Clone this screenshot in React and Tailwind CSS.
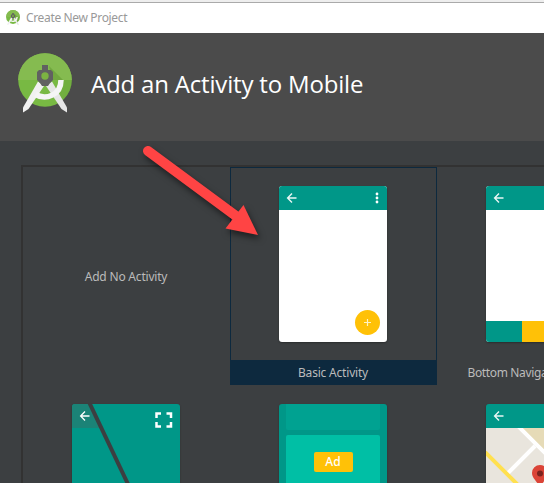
import React from "react";

function StudioLogo({ className }) {
  return (
    <svg className={className} viewBox="0 0 54 62" fill="none">
      <circle cx="27" cy="27" r="26.8" fill="#78b943" />
      <path d="M.2 27a26.8 26.8 0 0 1 53.6 0z" fill="#85bb50" />
      <path d="M31 13 45 27h-11z" fill="#689f38" opacity=".7" />
      <path d="M46 27h7.800a26.800 26.800 0 0 1-9 20L38 39z" fill="#689f38" opacity=".35" />
      <path d="M20 28.500 5 54.500v5L10.500 56 26 33z" fill="#f1f1f1" />
      <path d="m34 28.500 15 26v5L43.500 56 28 33z" fill="#e6e6e6" />
      <path d="M17.500 41.500C28 47.500 43 42 43 27" stroke="#f5f5f5" strokeWidth="5.500" />
      <path d="M24 12h6v5h3l2 2v8l-3 3-2 3h-6l-2-3-3-3v-8l2-2h3z" fill="#616161" />
      <circle cx="27" cy="23" r="3.700" fill="#7cb342" />
    </svg>
  );
}

function BackArrow() {
  return (
    <svg className="h-[12px] w-[12px]" viewBox="0 0 12 12" fill="none" stroke="#e8f6f4" strokeWidth="1.400">
      <path d="M10.500 6H2M6 1.500 1.600 6 6 10.500" />
    </svg>
  );
}

function Toolbar({ menu }) {
  return (
    <div className="flex h-6 shrink-0 items-center justify-between bg-[#009788] pl-[7px] pr-2">
      <BackArrow />
      {menu && (
        <svg className="h-[12px] w-[4px]" viewBox="0 0 4 12" fill="#ffffff">
          <circle cx="2" cy="2" r="1.400" />
          <circle cx="2" cy="6" r="1.400" />
          <circle cx="2" cy="10" r="1.400" />
        </svg>
      )}
    </div>
  );
}

function Phone({ className = "", children }) {
  return (
    <div className={"flex h-[156px] w-[108px] shrink-0 flex-col overflow-hidden rounded-[3px] shadow-[0_1px_2px_rgba(0,0,0,0.3)] " + className}>
      {children}
    </div>
  );
}

function Cell({ label, labelClass = "", selected, children }) {
  return (
    <div className={"flex h-[218px] w-[207px] flex-col border pt-[18px] " + (selected ? "border-[#0d293e]" : "border-transparent")}>
      <div className="pl-12">{children}</div>
      {label && (
        <div className={"mt-[18px] flex h-6 w-full shrink-0 items-center justify-center whitespace-nowrap pt-[2px] " + (selected ? "bg-[#0d293e] " : "") + labelClass}>
          {label}
        </div>
      )}
    </div>
  );
}

export default function App() {
  return (
    <div className="relative flex h-[483px] w-[544px] flex-col overflow-hidden bg-[#3c3f41] font-['Noto_Sans',sans-serif] text-[12px] tracking-[-0.200px] text-[#bbbbbb]">
      <div className="flex h-[33px] shrink-0 items-center border-t-[2px] border-[#eeeeee] bg-white">
        <div className="flex h-[31px] w-full items-center border-t border-[#aaaaaa] pl-[6px]">
          <StudioLogo className="h-[16px] w-[14px]" />
          <span className="ml-[6px] text-[12px] tracking-[-0.350px] text-[#999999]">Create New Project</span>
        </div>
      </div>
      <header className="flex h-[108px] shrink-0 items-center bg-[#4b4b4b] pb-[6px] pl-[18px]">
        <StudioLogo className="h-[62px] w-[54px]" />
        <h1 className="ml-[19px] whitespace-nowrap font-['Open_Sans',sans-serif] text-[24px] leading-8 tracking-[-0.180px] text-white">Add an Activity to Mobile</h1>
      </header>
      <main className="ml-[21px] mt-6 h-[318px] w-[660px] shrink-0 overflow-hidden border-l-2 border-t-2 border-[#323232]">
        <div className="grid w-[621px] grid-cols-3">
          <div className="flex h-[218px] items-center justify-center pr-[1px] pt-[2px]">Add No Activity</div>
          <Cell label="Basic Activity" labelClass="pr-[1px]" selected>
            <Phone className="bg-white">
              <Toolbar menu />
              <div className="flex flex-1 items-end justify-end pb-[7px] pr-[7px]">
                <div className="flex h-[25px] w-[25px] items-center justify-center rounded-full bg-[#ffc107]">
                  <svg className="h-[7px] w-[7px]" viewBox="0 0 7 7" stroke="#fff3c4" strokeWidth="1.200">
                    <path d="M3.500 0v7M0 3.500h7" />
                  </svg>
                </div>
              </div>
            </Phone>
          </Cell>
          <Cell label="Bottom Navigation Activity" labelClass="pr-[5px] tracking-[-0.350px]">
            <Phone className="bg-white">
              <Toolbar menu />
              <div className="flex-1" />
              <div className="grid h-[21px] grid-cols-3">
                <div className="bg-[#009788]" />
                <div className="bg-[#ffc107]" />
                <div className="bg-[#009788]" />
              </div>
            </Phone>
          </Cell>
          <Cell>
            <Phone>
              <svg className="h-[156px] w-[108px]" viewBox="0 0 108 156" fill="none">
                <path d="M0 0h108v156H0z" fill="#009788" />
                <path d="M0 0h17l11 24H0z" fill="#1b8377" />
                <path d="M17 -2 92 156" stroke="#3c3f41" strokeWidth="4" />
                <path d="M17.500 12H9m4-4.500L8.600 12 13 16.500" stroke="#fff" strokeWidth="1.300" />
                <path d="M84.500 14v-4.500H89M94.500 9.500h4.500V14M99 18v4.500h-4.500M89 22.500h-4.500V18" stroke="#fff" strokeWidth="2.500" />
              </svg>
            </Phone>
          </Cell>
          <Cell>
            <Phone className="bg-[#009788] px-[7px]">
              <div className="h-[26px] shrink-0 rounded-b-[2px] bg-[#00a291]" />
              <div className="mt-[5px] flex h-[56px] shrink-0 items-center justify-center rounded-[2px] bg-[#00bfa5]">
                <div className="mb-[2px] flex h-5 w-[39px] items-center justify-center rounded-[2px] bg-[#ffc107] text-[12px] font-medium tracking-normal text-white">Ad</div>
              </div>
            </Phone>
          </Cell>
          <Cell>
            <Phone>
              <Toolbar menu />
              <svg className="h-[132px] w-[108px]" viewBox="0 0 108 132" fill="none">
                <path d="M0 0h108v132H0z" fill="#e9e5dd" />
                <path d="M34 0h74v74z" fill="#e6dbb7" />
                <path d="M32-2 84 50M49 18 22 45" stroke="#fff" strokeWidth="4" />
                <path d="m-2 23 80 80" stroke="#ffe04f" strokeWidth="4" />
                <path d="M54 62c-1-8-8-11-8-17a8 8 0 0 1 16 0c0 6-7 9-8 17z" fill="#db4437" />
                <circle cx="54" cy="45.500" r="3" fill="#7b231e" />
              </svg>
            </Phone>
          </Cell>
        </div>
      </main>
      <svg className="absolute left-[135px] top-[138px] h-[112px] w-[136px] drop-shadow-[2px_4px_3px_rgba(0,0,0,0.5)]" viewBox="135 138 136 112">
        <path d="M148 151 236 216" stroke="#ff4444" strokeWidth="10" strokeLinecap="round" />
        <path d="M243.500 205 258 235 225.500 228.500z" fill="#ff4444" />
      </svg>
    </div>
  );
}
